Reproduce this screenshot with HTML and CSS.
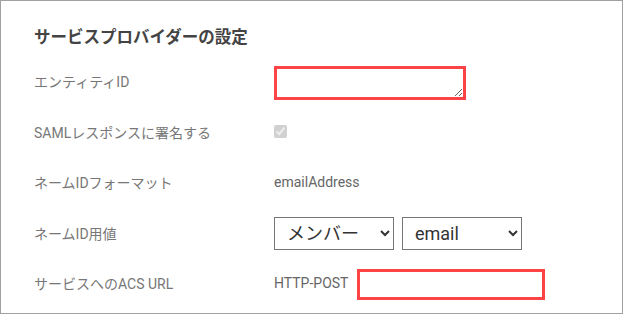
FILE: index.html
```html
<!DOCTYPE html>
<html lang="ja">

<head>
    <meta charset="UTF-8">
    <meta name="viewport" content="width=device-width, initial-scale=1.0">
    <title>サービスプロバイダーの設定</title>
    <link rel="stylesheet" href="styles.css">
</head>

<body>
    <div class="panel">
        <h2 class="panel_title">サービスプロバイダーの設定</h2>

        <div class="form_grid">
            <div class="label">エンティティID</div>
            <div class="value">
                <textarea class="hl_box entity_box"></textarea>
            </div>

            <div class="label">SAMLレスポンスに署名する</div>
            <div class="value">
                <input type="checkbox" class="sign_check" checked disabled>
            </div>

            <div class="label">ネームIDフォーマット</div>
            <div class="value">emailAddress</div>

            <div class="label">ネームID用値</div>
            <div class="value selects">
                <select class="sel">
                    <option>メンバー</option>
                </select>
                <select class="sel">
                    <option>email</option>
                </select>
            </div>

            <div class="label">サービスへのACS URL</div>
            <div class="value">
                <span class="binding">HTTP-POST</span>
                <input type="text" class="hl_box acs_box">
            </div>
        </div>
    </div>
</body>

</html>
```

FILE: styles.css
```css
* {
    box-sizing: border-box;
}

body {
    margin: 0;
    font-family: Roboto, "Noto Sans CJK JP", sans-serif;
    background: #fff;
}

.panel {
    width: 623px;
    height: 314px;
    border: 1px solid #a0a0a0;
    padding: 19px 0 0 33px;
}

.panel_title {
    margin: 0;
    height: 36px;
    line-height: 36px;
    font-size: 16.5px;
    font-weight: bold;
    color: #444;
}

.form_grid {
    display: grid;
    grid-template-columns: 240px 1fr;
    grid-auto-rows: 50.5px;
    align-items: center;
}

.label {
    font-size: 14px;
    color: #777;
}

.value {
    display: flex;
    align-items: center;
    font-size: 14px;
    color: #666;
}

.hl_box {
    border: 3px solid #fc4446;
    background: #fff;
    margin: 0;
    outline: none;
}

.entity_box {
    width: 192px;
    height: 34px;
    margin-top: 3px;
}

.sign_check {
    width: 13px;
    height: 13px;
    margin: 0;
}

.selects {
    gap: 8px;
    padding-top: 2px;
}

.sel {
    width: 120px;
    height: 33px;
    font-family: Roboto, "Noto Sans CJK JP", sans-serif;
    font-size: 18px;
    color: #333;
    border: 1px solid #767676;
    border-radius: 0;
    background: #fff;
    padding: 0 4px 0 8px;
}

.binding {
    margin-right: 9px;
}

.acs_box {
    width: 188px;
    height: 31px;
    margin-top: 3px;
}
```
